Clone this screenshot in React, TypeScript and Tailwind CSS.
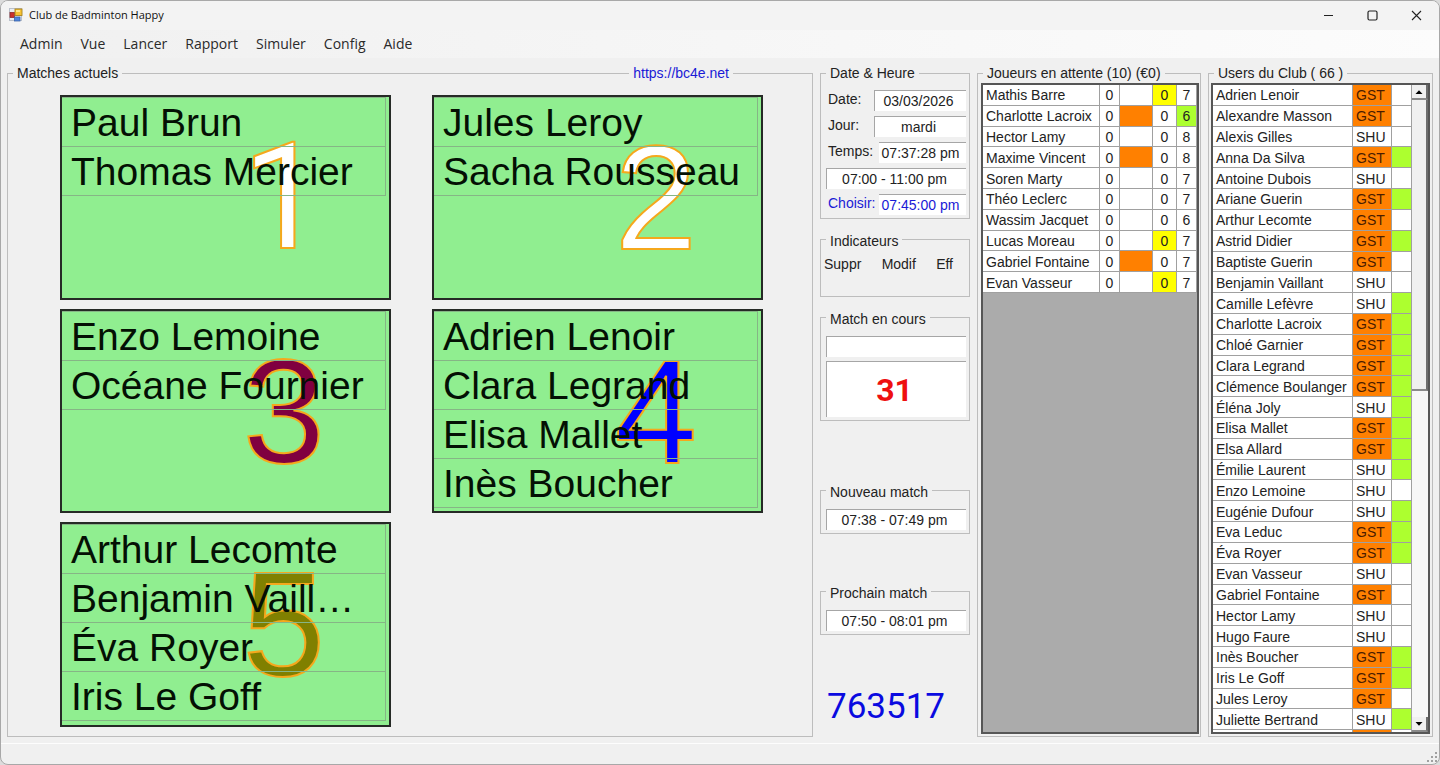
import { useRef } from "react";
import type { ReactNode } from "react";

const menus = ["Admin", "Vue", "Lancer", "Rapport", "Simuler", "Config", "Aide"];

const courts = [
  { id: 1, look: "font-['Roboto',sans-serif] text-white", players: ["Paul Brun", "Thomas Mercier"] },
  { id: 2, look: "text-white", players: ["Jules Leroy", "Sacha Rousseau"] },
  { id: 3, look: "text-[#800040]", players: ["Enzo Lemoine", "Océane Fournier"] },
  { id: 4, look: "text-[#0000ff]", players: ["Adrien Lenoir", "Clara Legrand", "Elisa Mallet", "Inès Boucher"] },
  { id: 5, look: "text-[#808000]", players: ["Arthur Lecomte", "Benjamin Vaillant", "Éva Royer", "Iris Le Goff"] },
];

type Waiting = { name: string; guest?: boolean; flag?: boolean; level: number; levelFlag?: boolean };

const waiting: Waiting[] = [
  { name: "Mathis Barre", flag: true, level: 7 },
  { name: "Charlotte Lacroix", guest: true, level: 6, levelFlag: true },
  { name: "Hector Lamy", level: 8 },
  { name: "Maxime Vincent", guest: true, level: 8 },
  { name: "Soren Marty", level: 7 },
  { name: "Théo Leclerc", level: 7 },
  { name: "Wassim Jacquet", level: 6 },
  { name: "Lucas Moreau", flag: true, level: 7 },
  { name: "Gabriel Fontaine", guest: true, level: 7 },
  { name: "Evan Vasseur", flag: true, level: 7 },
];

const users: [string, string, boolean][] = [
  ["Adrien Lenoir", "GST", false],
  ["Alexandre Masson", "GST", false],
  ["Alexis Gilles", "SHU", false],
  ["Anna Da Silva", "GST", true],
  ["Antoine Dubois", "SHU", false],
  ["Ariane Guerin", "GST", true],
  ["Arthur Lecomte", "GST", false],
  ["Astrid Didier", "GST", true],
  ["Baptiste Guerin", "GST", false],
  ["Benjamin Vaillant", "SHU", false],
  ["Camille Lefèvre", "SHU", true],
  ["Charlotte Lacroix", "GST", true],
  ["Chloé Garnier", "GST", true],
  ["Clara Legrand", "GST", true],
  ["Clémence Boulanger", "GST", true],
  ["Éléna Joly", "SHU", true],
  ["Elisa Mallet", "GST", true],
  ["Elsa Allard", "GST", true],
  ["Émilie Laurent", "SHU", true],
  ["Enzo Lemoine", "SHU", false],
  ["Eugénie Dufour", "SHU", true],
  ["Eva Leduc", "GST", true],
  ["Éva Royer", "GST", true],
  ["Evan Vasseur", "SHU", false],
  ["Gabriel Fontaine", "GST", false],
  ["Hector Lamy", "SHU", false],
  ["Hugo Faure", "SHU", false],
  ["Inès Boucher", "GST", true],
  ["Iris Le Goff", "GST", true],
  ["Jules Leroy", "GST", false],
  ["Juliette Bertrand", "SHU", true],
  ["\u00a0", "", false],
];

type GroupProps = { title: string; className?: string; legend?: string; children: ReactNode };

function Group({ title, className = "", legend = "", children }: GroupProps) {
  return (
    <fieldset className={`min-w-0 border border-[#bdbdbd] ${className}`}>
      <legend className={`ml-[5px] px-1 leading-4 ${legend}`}>{title}</legend>
      {children}
    </fieldset>
  );
}

function Field({ label, value, box, blue }: { label: string; value: string; box: string; blue?: boolean }) {
  return (
    <label className={`flex justify-between ${blue ? "text-[#1a1ad6]" : ""}`}>
      <span className="-mr-2 leading-[18px]">{label}</span>
      <input
        readOnly
        value={value}
        className={`h-[21px] border-t border-[#a6a6a6] bg-white pr-1 text-center outline-none ${box}`}
      />
    </label>
  );
}

function WideField({ label, value, className }: { label: string; value: string; className: string }) {
  return (
    <input
      readOnly
      aria-label={label}
      value={value}
      className={`block border-t border-l border-[#a6a6a6] bg-white pr-1 text-center outline-none ${className}`}
    />
  );
}

function AppIcon() {
  return (
    <svg width="14" height="14" viewBox="0 0 14 14" aria-hidden="true">
      <rect x="0.5" y="0.5" width="12" height="12" fill="#e9edf3" stroke="#b9c0cb" />
      <rect x="1" y="4.5" width="4.5" height="5" fill="#c9302c" stroke="#8e2a28" strokeWidth="0.8" />
      <rect x="6" y="1" width="7" height="6.5" fill="#f6c233" stroke="#a9831c" strokeWidth="0.9" />
      <rect x="7" y="2" width="4" height="2" fill="#fde68e" />
      <rect x="5.5" y="9" width="5.5" height="4" fill="#4f86dd" stroke="#3a63a8" strokeWidth="0.8" />
    </svg>
  );
}

function TitleBar() {
  return (
    <header className="flex h-[29px] shrink-0 items-center justify-between bg-[#f3f3f3] pb-px pl-2 font-['Open_Sans','Noto_Sans',sans-serif]">
      <div className="flex items-center gap-[6px]">
        <AppIcon />
        <h1 className="text-[11px] leading-4 text-[#111]">Club de Badminton Happy</h1>
      </div>
      <div className="flex">
        <button aria-label="Réduire" className="flex h-7 w-11 items-center justify-center">
          <svg width="11" height="11" viewBox="0 0 11 11" stroke="#222" fill="none"><path d="M1 5.5h9" /></svg>
        </button>
        <button aria-label="Agrandir" className="flex h-7 w-11 items-center justify-center">
          <svg width="11" height="11" viewBox="0 0 11 11" stroke="#222" strokeWidth="1.2" fill="none"><rect x="1" y="1" width="9" height="9" rx="1.5" /></svg>
        </button>
        <button aria-label="Fermer" className="flex h-7 w-[45px] items-center justify-center">
          <svg width="11" height="11" viewBox="0 0 11 11" stroke="#222" strokeWidth="1.1" fill="none"><path d="M1 1l9 9M10 1l-9 9" /></svg>
        </button>
      </div>
    </header>
  );
}

function Court({ id, look, players }: { id: number; look: string; players: string[] }) {
  return (
    <article className="relative border-2 border-[#262a26] bg-[#90ee90]">
      <span
        className={`absolute top-[26px] right-16 text-[148px] leading-[150px] [-webkit-text-stroke:2px_#f5a81c] ${look}`}
      >
        {id}
      </span>
      <ul className="relative mr-[3px] border-t border-r border-[#86b586]">
        {players.map((name) => (
          <li key={name} className="h-[49px] truncate border-b border-[#86b586] pr-4 pl-[9px] text-[39px] leading-[50px] text-[#041004]">
            {name}
          </li>
        ))}
      </ul>
    </article>
  );
}

const cell = "border-r border-b border-[#a0a0a0] px-0 pt-[2px] pb-0 leading-[17px]";

function WaitingTable() {
  return (
    <div className="min-h-0 flex-1 overflow-hidden border-2 border-[#565656] bg-[#ababab]">
      <table className="h-[208px] w-full table-fixed border-separate border-spacing-0 bg-white">
        <colgroup>
          <col />
          <col className="w-5" />
          <col className="w-[33px]" />
          <col className="w-6" />
          <col className="w-5" />
        </colgroup>
        <tbody>
          {waiting.map((p) => (
            <tr key={p.name}>
              <td className={`${cell} truncate pl-[3px]`}>{p.name}</td>
              <td className={`${cell} text-center`}>0</td>
              <td className={`${cell} ${p.guest ? "bg-[#ff8000]" : ""}`} />
              <td className={`${cell} text-center ${p.flag ? "bg-[#ffff00]" : ""}`}>0</td>
              <td className={`${cell} text-center ${p.levelFlag ? "bg-[#adff2f]" : ""}`}>{p.level}</td>
            </tr>
          ))}
        </tbody>
      </table>
    </div>
  );
}

function UsersTable() {
  const list = useRef<HTMLDivElement>(null);
  const scroll = (by: number) => list.current?.scrollBy({ top: by });
  const button =
    "flex h-[15px] shrink-0 items-center justify-center border-r-2 border-b-2 border-r-[#6e6e6e] border-b-[#8a8a8a] bg-[#f0f0f0]";
  return (
    <div className="flex min-h-0 flex-1 border-2 border-[#565656] bg-white">
      <div ref={list} className="h-full min-w-0 flex-1 overflow-hidden">
        <table className="h-[666px] w-full table-fixed border-separate border-spacing-0">
          <colgroup>
            <col />
            <col className="w-[39px]" />
            <col className="w-5" />
          </colgroup>
          <tbody>
            {users.map(([name, kind, present], i) => (
              <tr key={i}>
                <td className={`${cell} truncate pl-[3px]`}>{name}</td>
                <td className={`${cell} pl-[3px] ${kind === "SHU" ? "" : "bg-[#ff8000] text-[#4a1c00]"}`}>{kind}</td>
                <td className={`${cell} ${present ? "bg-[#adff2f]" : ""}`} />
              </tr>
            ))}
          </tbody>
        </table>
      </div>
      <div className="flex w-4 flex-col bg-[#f7f7f7]">
        <button aria-label="Monter" className={button} onClick={() => scroll(-21)}>
          <svg width="8" height="4" viewBox="0 0 8 4"><path d="M0.5 4L4 0.3L7.5 4z" /></svg>
        </button>
        <div className="h-[291px] shrink-0 border-r-2 border-b-2 border-r-[#6e6e6e] border-b-[#8a8a8a] bg-[#f0f0f0]" />
        <div className="flex-1" />
        <button aria-label="Descendre" className={button} onClick={() => scroll(21)}>
          <svg width="8" height="4" viewBox="0 0 8 4"><path d="M0.5 0L4 3.7L7.5 0z" /></svg>
        </button>
      </div>
    </div>
  );
}

export default function App() {
  return (
    <div className="h-screen bg-[#dcdcdc]">
      <div className="flex h-full flex-col overflow-hidden rounded-lg border border-[#a8a8a8] bg-[#f0f0f0] font-['Liberation_Sans',Arial,sans-serif] text-sm text-[#222]">
        <TitleBar />
        <nav className="flex h-7 shrink-0 items-center gap-[18px] bg-linear-to-r from-[#f0f0f0] to-[#fcfcfc] px-[19px] font-['Open_Sans','Noto_Sans',sans-serif] text-sm text-[#2a2a2a]">
          {menus.map((m) => (
            <button key={m}>{m}</button>
          ))}
        </nav>

        <main className="flex min-h-0 flex-1 gap-[7px] px-[6px] pt-[7px] pb-[6px]">
          <div className="relative flex min-w-0 flex-1">
            <Group title="Matches actuels" className="flex flex-1 flex-col">
              <div className="grid min-h-0 flex-1 grid-cols-2 grid-rows-3 gap-x-[41px] gap-y-[9px] pt-[14px] pr-[49px] pb-[9px] pl-[52px]">
                {courts.map((c) => (
                  <Court key={c.id} {...c} />
                ))}
              </div>
            </Group>
            <a href="https://bc4e.net" className="absolute top-0 right-20 bg-[#f0f0f0] px-1 leading-4 text-[#1a1ad6]">
              https://bc4e.net
            </a>
          </div>

          <div className="w-[150px] shrink-0">
            <Group title="Date & Heure">
              <div className="flex flex-col gap-[5px] pt-[9px] pr-[3px] pb-[3px] pl-[7px]">
                <Field label="Date:" value="03/03/2026" box="w-[92px] border-l" />
                <Field label="Jour:" value="mardi" box="w-[92px] border-l" />
                <Field label="Temps:" value="07:37:28 pm" box="w-[87px]" />
                <WideField label="Plage horaire" value="07:00 - 11:00 pm" className="-ml-[2px] h-[21px] w-[140px]" />
                <Field label="Choisir:" value="07:45:00 pm" box="w-[87px]" blue />
              </div>
            </Group>
            <Group title="Indicateurs" legend="pt-1" className="mt-[10px]">
              <div className="flex justify-between pt-[6px] pr-4 pb-[23px] pl-[3px] leading-[18px]">
                <span>Suppr</span>
                <span>Modif</span>
                <span>Eff</span>
              </div>
            </Group>
            <Group title="Match en cours" legend="pt-1" className="mt-[10px]">
              <div className="flex flex-col gap-1 pt-[9px] pr-[3px] pb-[3px] pl-[5px]">
                <WideField label="Match" value="" className="h-[21px] w-full" />
                <WideField
                  label="Numéro"
                  value="31"
                  className="h-14 w-full font-['Roboto',sans-serif] text-[32px] font-bold text-[#ee1010]"
                />
              </div>
            </Group>
            <Group title="Nouveau match" legend="pt-1" className="mt-[59px]">
              <div className="pt-[9px] pr-[3px] pb-[3px] pl-[5px]">
                <WideField label="Nouveau match" value="07:38 - 07:49 pm" className="h-[21px] w-full" />
              </div>
            </Group>
            <Group title="Prochain match" legend="pt-1" className="mt-[47px]">
              <div className="pt-[9px] pr-[3px] pb-[3px] pl-[5px]">
                <WideField label="Prochain match" value="07:50 - 08:01 pm" className="h-[21px] w-full" />
              </div>
            </Group>
            <output className="mt-[52px] block pl-[7px] font-['Roboto',sans-serif] text-[35px] leading-10 text-[#0a0ae0]">
              763517
            </output>
          </div>

          <Group title="Joueurs en attente (10) (€0)" className="flex w-[224px] shrink-0 flex-col">
            <div className="flex min-h-0 flex-1 flex-col pt-[2px] pr-px pb-[2px] pl-[3px]">
              <WaitingTable />
            </div>
          </Group>

          <Group title="Users du Club ( 66 )" className="flex w-[225px] shrink-0 flex-col">
            <div className="flex min-h-0 flex-1 flex-col p-[2px]">
              <UsersTable />
            </div>
          </Group>
        </main>

        <footer className="flex h-[21px] shrink-0 items-end justify-end border-t border-[#fdfdfd] p-px">
          <svg width="12" height="12" viewBox="0 0 12 12" fill="#a0a0a0" aria-hidden="true">
            <path d="M9 1h2v2h-2zM5 5h2v2h-2zM9 5h2v2h-2zM1 9h2v2h-2zM5 9h2v2h-2zM9 9h2v2h-2z" />
          </svg>
        </footer>
      </div>
    </div>
  );
}
